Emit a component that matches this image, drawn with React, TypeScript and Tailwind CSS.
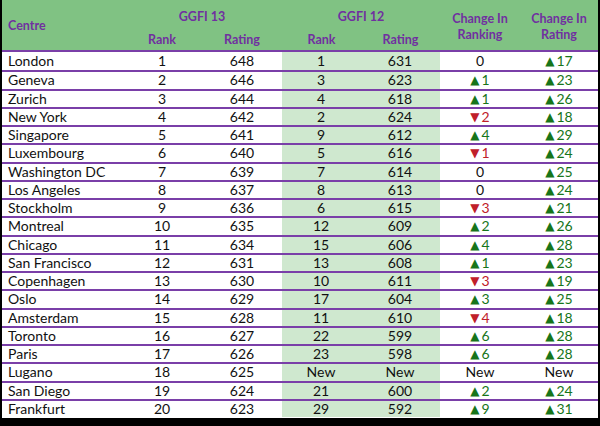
import React from 'react';

type Row = [string, number, number, string, string, string, string];

const rows: Row[] = [
  ['London', 1, 648, '1', '631', '0', '+17'],
  ['Geneva', 2, 646, '3', '623', '+1', '+23'],
  ['Zurich', 3, 644, '4', '618', '+1', '+26'],
  ['New York', 4, 642, '2', '624', '-2', '+18'],
  ['Singapore', 5, 641, '9', '612', '+4', '+29'],
  ['Luxembourg', 6, 640, '5', '616', '-1', '+24'],
  ['Washington DC', 7, 639, '7', '614', '0', '+25'],
  ['Los Angeles', 8, 637, '8', '613', '0', '+24'],
  ['Stockholm', 9, 636, '6', '615', '-3', '+21'],
  ['Montreal', 10, 635, '12', '609', '+2', '+26'],
  ['Chicago', 11, 634, '15', '606', '+4', '+28'],
  ['San Francisco', 12, 631, '13', '608', '+1', '+23'],
  ['Copenhagen', 13, 630, '10', '611', '-3', '+19'],
  ['Oslo', 14, 629, '17', '604', '+3', '+25'],
  ['Amsterdam', 15, 628, '11', '610', '-4', '+18'],
  ['Toronto', 16, 627, '22', '599', '+6', '+28'],
  ['Paris', 17, 626, '23', '598', '+6', '+28'],
  ['Lugano', 18, 625, 'New', 'New', 'New', 'New'],
  ['San Diego', 19, 624, '21', '600', '+2', '+24'],
  ['Frankfurt', 20, 623, '29', '592', '+9', '+31'],
];

const cols = 'grid grid-cols-[120px_80px_80px_78px_80px_80px_78px]';

const Change = ({ v }: { v: string }) => {
  if (v.startsWith('+'))
    return (
      <span className="text-[#17751a] flex items-center">
        <span className="text-[12px] mr-[2px] font-['DejaVu_Sans']">▲</span>
        {v.slice(1)}
      </span>
    );
  if (v.startsWith('-'))
    return (
      <span className="text-[#c0202a] flex items-center">
        <span className="text-[12px] mr-[2px] font-['DejaVu_Sans']">▼</span>
        {v.slice(1)}
      </span>
    );
  return <span>{v}</span>;
};

export default function App() {
  return (
    <div
      className="w-[600px] h-[426px] bg-black pl-[2px] pr-[2px] pb-[8px] overflow-hidden"
      style={{ fontFamily: 'Lato, "Liberation Sans", sans-serif' }}
    >
      <div className="bg-white h-full">
        <div className={`${cols} h-[52px] bg-[#80c283] text-[#7030a0] font-bold text-[12.5px] leading-[16px] border-b-2 border-[#7a3fa8]`}>
          <div className="flex items-center pl-[6px] pt-[2px]">Centre</div>
          <div className="col-span-2 grid grid-cols-2 grid-rows-[30px_20px]">
            <div className="col-span-2 flex items-center justify-center pt-[4px]">GGFI 13</div>
            <div className="flex items-center justify-center">Rank</div>
            <div className="flex items-center justify-center">Rating</div>
          </div>
          <div className="col-span-2 grid grid-cols-2 grid-rows-[30px_20px]">
            <div className="col-span-2 flex items-center justify-center pt-[4px]">GGFI 12</div>
            <div className="flex items-center justify-center">Rank</div>
            <div className="flex items-center justify-center">Rating</div>
          </div>
          <div className="flex items-center justify-center text-center pt-[4px]">
            Change In
            <br />
            Ranking
          </div>
          <div className="flex items-center justify-center text-center pt-[4px]">
            Change In
            <br />
            Rating
          </div>
        </div>
        {rows.map((r, i) => (
          <div
            key={r[0]}
            className={`${cols} h-[18.25px] text-[14px] leading-[16px] text-[#111] ${i > 0 ? 'border-t-2 border-[#7a3fa8]' : ''}`}
          >
            <div className="flex items-center pl-[6px]">{r[0]}</div>
            <div className="flex items-center justify-center">{r[1]}</div>
            <div className="flex items-center justify-center">{r[2]}</div>
            <div className="flex items-center justify-center bg-[#cfe8cf]">{r[3]}</div>
            <div className="flex items-center justify-center bg-[#cfe8cf]">{r[4]}</div>
            <div className="flex items-center justify-center">
              <Change v={r[5]} />
            </div>
            <div className="flex items-center justify-center">
              <Change v={r[6]} />
            </div>
          </div>
        ))}
      </div>
    </div>
  );
}
